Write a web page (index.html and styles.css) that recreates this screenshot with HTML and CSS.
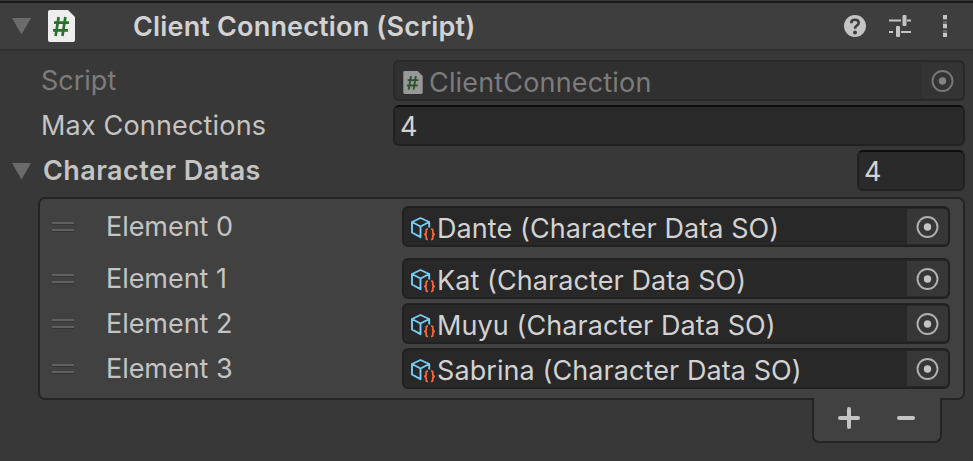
FILE: index.html
```
<!DOCTYPE html>
<html lang="en">
<head>
<meta charset="utf-8">
<title>Inspector</title>
<link rel="stylesheet" href="styles.css">
</head>
<body>
<svg width="0" height="0" class="defs">
  <symbol id="fold" viewBox="0 0 20 18"><path d="M0 1h19L9.5 17.5z" fill="#6b6b6b"/></symbol>
  <symbol id="script" viewBox="0 0 27 32"><path d="M2 0H20L27 7V30Q27 32 25 32H2Q0 32 0 30V2Q0 0 2 0z" fill="#eee"/><path d="M10.6 7L7.6 26M17.4 7L14.4 26M6 12.7H21M5 20.3H20" stroke="#2a712d" stroke-width="2.7" fill="none"/></symbol>
  <symbol id="target" viewBox="0 0 24 24"><circle cx="12.5" cy="12" r="10" fill="none" stroke="#b0b0b0" stroke-width="1.9"/><circle cx="12.5" cy="12" r="3.7" fill="#c4c4c4"/></symbol>
  <symbol id="asset" viewBox="0 0 26 26"><path d="M19.2 12.5V7L10.5 3 2 7V17.5L10.5 22.2V11.5L2 7M10.5 11.5L19.2 7" fill="none" stroke="#79cdf5" stroke-width="1.9" stroke-linejoin="round"/><path d="M18 14.2H17.2Q16.2 14.2 16.2 15.3V17.4Q16.2 19.3 14 19.3Q16.2 19.3 16.2 21.2V23.2Q16.2 24.3 17.2 24.3H18M21 14.2H21.8Q22.8 14.2 22.8 15.3V17.4Q22.8 19.3 25 19.3Q22.8 19.3 22.8 21.2V23.2Q22.8 24.3 21.8 24.3H21" fill="none" stroke="#f2683c" stroke-width="1.8"/></symbol>
</svg>
<main class="inspector">
  <header class="head">
    <svg class="fold"><use href="#fold"/></svg>
    <svg class="head-icon"><use href="#script"/></svg>
    <h1 class="title">Client Connection (Script)</h1>
    <div class="tools">
      <svg width="22" height="22" viewBox="0 0 22 22"><circle cx="11" cy="11" r="11" fill="#c4c4c4"/><path d="M7.2 8.2Q7.2 4.7 11 4.7Q14.7 4.7 14.7 7.7Q14.7 9.4 12.8 10.5Q11 11.6 11 13.8" fill="none" stroke="#3e3e3e" stroke-width="2.6"/><circle cx="11" cy="17.6" r="2" fill="#3e3e3e"/></svg>
      <svg width="22" height="22" viewBox="0 0 22 22"><path d="M0 5.5H12M18 5.5H22M0 17H4M12 17H22" stroke="#c4c4c4" stroke-width="1.8"/><rect x="13.5" y="0" width="4" height="11" rx="1" fill="#c4c4c4"/><rect x="7" y="11" width="4" height="11" rx="1" fill="#c4c4c4"/></svg>
      <svg width="6" height="22" viewBox="0 0 6 22"><path d="M1 0H5V4H1zM1 9H5V13H1zM1 18H5V22H1z" fill="#c4c4c4"/><path d="M1 4H5V5H1zM1 6H5V9H1zM1 13H5V14H1zM1 15H5V18H1z" fill="#6a6a6a"/></svg>
    </div>
  </header>
  <section class="props">
    <div class="row muted">
      <span class="label tight">Script</span>
      <div class="field object"><svg class="mini"><use href="#script"/></svg><span class="value">ClientConnection</span><span class="pick"><svg class="target"><use href="#target"/></svg></span></div>
    </div>
    <div class="row">
      <span class="label">Max Connections</span>
      <div class="field input"><span>4</span></div>
    </div>
    <div class="row array">
      <svg class="fold"><use href="#fold"/></svg>
      <span class="label bold">Character Datas</span>
      <div class="field input count"><span>4</span></div>
    </div>
  </section>
  <section class="list">
    <div class="item first"><i class="grip"></i><span class="label">Element 0</span><div class="field object"><svg class="asset"><use href="#asset"/></svg><span class="value">Dante (Character Data SO)</span><span class="pick"><svg class="target"><use href="#target"/></svg></span></div></div>
    <div class="item"><i class="grip"></i><span class="label">Element 1</span><div class="field object"><svg class="asset"><use href="#asset"/></svg><span class="value">Kat (Character Data SO)</span><span class="pick"><svg class="target"><use href="#target"/></svg></span></div></div>
    <div class="item"><i class="grip"></i><span class="label">Element 2</span><div class="field object"><svg class="asset"><use href="#asset"/></svg><span class="value">Muyu (Character Data SO)</span><span class="pick"><svg class="target"><use href="#target"/></svg></span></div></div>
    <div class="item"><i class="grip"></i><span class="label">Element 3</span><div class="field object"><svg class="asset"><use href="#asset"/></svg><span class="value">Sabrina (Character Data SO)</span><span class="pick"><svg class="target"><use href="#target"/></svg></span></div></div>
  </section>
  <footer class="foot">
    <svg width="22" height="22" viewBox="0 0 22 22"><path d="M2 11H20M11 2V20" stroke="#c4c4c4" stroke-width="4" stroke-linecap="round"/></svg>
    <svg width="18" height="22" viewBox="0 0 18 22"><path d="M2 11H16" stroke="#c4c4c4" stroke-width="4" stroke-linecap="round"/></svg>
  </footer>
</main>
</body>
</html>
```
FILE: styles.css
```
* { box-sizing: border-box; }
body { margin: 0; background: #383838; color: #c4c4c4; font: 27px/41px Inter, "Liberation Sans", sans-serif; letter-spacing: 0.17px; white-space: nowrap; }
svg { display: block; flex: none; }
.defs { position: absolute; }
.inspector { height: 461px; overflow: hidden; border-top: 1px solid #383838; }
.head { display: flex; align-items: center; height: 50px; padding-left: 12px; background: #3e3e3e; border-top: 2px solid #1a1a1a; border-bottom: 2px solid #303030; }
.fold { width: 20px; height: 18px; }
.head-icon { width: 27px; height: 32px; margin-left: 16px; }
.title { margin: 0 0 0 58px; font-size: 27px; line-height: 41px; font-weight: 600; color: #d2d2d2; }
.tools { display: flex; gap: 23px; margin: 0 25px 0 auto; }
.tools svg:last-child { margin-left: 8px; }
.props { display: flex; flex-direction: column; gap: 4px; padding: 9px 8px 0 0; }
.row { display: grid; grid-template-columns: 352px 1fr; height: 41px; padding-left: 41px; }
.field { display: flex; align-items: center; height: 41px; border: 2px solid #212121; border-radius: 6px; background: #2a2a2a; color: #d2d2d2; }
.input { border-top-color: #0d0d0d; padding-left: 5px; }
.input span { padding-top: 2px; }
.object { padding-left: 8px; background: #282828; }
.value { padding-top: 3px; }
.pick { display: flex; align-items: center; width: 41px; height: 35px; margin-left: auto; padding-left: 8px; background: #373737; border-radius: 0 4px 4px 0; }
.target { width: 24px; height: 24px; }
.mini { width: 20px; height: 23px; margin-right: 6px; margin-top: 3px; }
.muted .label { color: #7c7c7c; }
.muted .tight { letter-spacing: 0; }
.muted .field { background: #303030; border-color: #292929; color: #7c7c7c; }
.muted .mini, .muted .target { opacity: .55; }
.muted .pick { background: #343434; }
.array { grid-template-columns: 20px 1fr 108px; padding-left: 12px; }
.array .fold { margin-top: 12px; }
.bold { font-weight: 600; padding-left: 11px; letter-spacing: 0.43px; }
.list { height: 203px; margin: 6px 8px 0 38px; padding: 7px 13px 0 12px; border: 2px solid #242424; border-radius: 7px; background: #414141; letter-spacing: 0.08px; }
.list .label { letter-spacing: -0.05px; }
.list .object { padding-left: 6px; }
.item { display: grid; grid-template-columns: 54px 296px 1fr; height: 41px; margin-bottom: 4px; }
.item.first { margin-bottom: 11px; }
.grip { width: 22px; height: 9px; margin-top: 16px; border: solid #606060; border-width: 2px 0; box-shadow: 0 1px #353535, inset 0 1px #353535; }
.asset { width: 26px; height: 26px; margin-top: 3px; margin-right: 1px; }
.foot { position: relative; display: flex; align-items: center; gap: 37px; width: 130px; height: 45px; margin: -2px 31px 0 auto; padding: 0 0 3px 24px; background: #414141; border: 2px solid #242424; border-top: 0; border-radius: 0 0 7px 7px; }
```
